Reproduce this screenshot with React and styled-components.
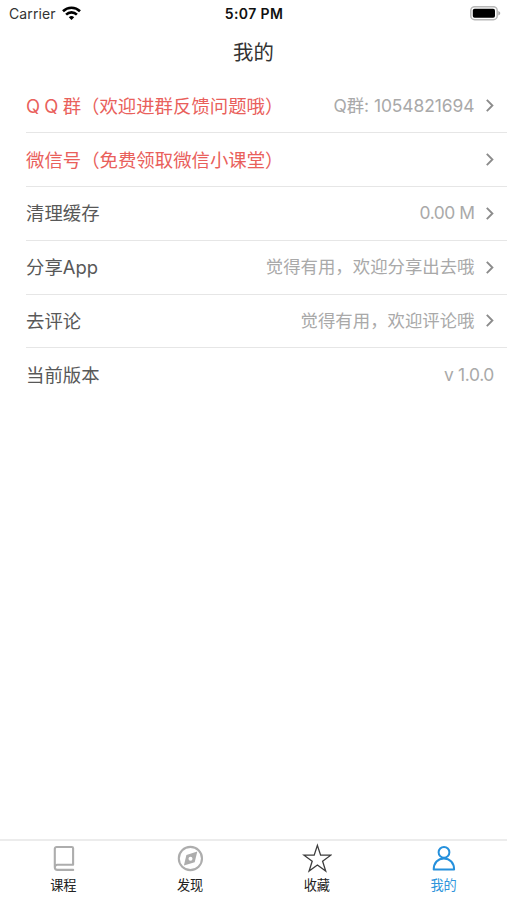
import React from 'react';
import styled, { createGlobalStyle } from 'styled-components';

const rows = [
    { label: 'Q Q 群（欢迎进群反馈问题哦）', value: 'Q群: 1054821694', red: true, arrow: true, spacing: '-0.05px' },
    { label: '微信号（免费领取微信小课堂）', value: '', red: true, arrow: true },
    { label: '清理缓存', value: '0.00 M', arrow: true, spacing: '-0.45px' },
    { label: '分享App', value: '觉得有用，欢迎分享出去哦', arrow: true },
    { label: '去评论', value: '觉得有用，欢迎评论哦', arrow: true },
    { label: '当前版本', value: 'v 1.0.0', spacing: '-0.35px' },
]

const WifiIcon = () => (
    <svg width="19" height="15" viewBox="0 0 19 15" fill="none" stroke="#000" strokeWidth="2.6">
        <path d="M1 5.2a12.2 12.2 0 0 1 17 0" />
        <path d="M4.1 8.6a7.7 7.7 0 0 1 10.8 0" />
        <path d="M9.5 14.1l-2.7-2.8a3.9 3.9 0 0 1 5.4 0z" fill="#000" stroke="none" />
    </svg>
)

const BatteryIcon = () => (
    <svg width="31" height="15" viewBox="0 0 31 15">
        <rect x="0.8" y="0.7" width="26.4" height="13" rx="3.8" fill="#fff" stroke="#b8b8b8" strokeWidth="1.5" />
        <rect x="2.8" y="2.7" width="22.2" height="9" rx="1.8" fill="#000" />
        <path d="M28.3 5c2.6 1 2.6 3.4 0 4.4z" fill="#a8a8a8" />
    </svg>
)

const ArrowIcon = () => (
    <svg width="8" height="13" viewBox="0 0 8 13" fill="none" stroke="#8c8c8c" strokeWidth="1.9">
        <path d="M0.8 0.8l5.6 5.7-5.6 5.7" />
    </svg>
)

const BookIcon = () => (
    <svg width="30" height="30" viewBox="0 0 30 30" fill="none" stroke="#adadad" strokeWidth="2.1" strokeLinecap="round" strokeLinejoin="round">
        <path d="M25.2 26.9H9.4a2.6 2.6 0 0 1-2.6-2.6V5.8a1.8 1.8 0 0 1 1.8-1.8h15.2a1.3 1.3 0 0 1 1.3 1.3v16.4H9.4a2.6 2.6 0 0 0-2.6 2.6" />
    </svg>
)

const CompassIcon = () => (
    <svg width="30" height="30" viewBox="0 0 30 30" fill="none" stroke="#adadad" strokeWidth="2.1">
        <circle cx="15.4" cy="15.5" r="11.6" />
        <path fillRule="evenodd" fill="#adadad" stroke="none" d="M22.3 8.6l-2.6 10.6-10.8 3.4 2.5-10.7zM15.5 13.7a2 2 0 1 0 .01 4 2 2 0 0 0-.01-4z" />
    </svg>
)

const StarIcon = () => (
    <svg width="30" height="30" viewBox="0 0 30 30" fill="none" stroke="#3c3c3c" strokeWidth="1.3">
        <path d="M15.4 2.4l3.2 9.8h10.2l-8.2 6.1 3.1 9.7-8.3-6-8.3 6 3.1-9.7L2 12.2h10.2z" />
    </svg>
)

const UserIcon = () => (
    <svg width="30" height="30" viewBox="0 0 30 30" fill="none" stroke="#2590dc" strokeWidth="2" strokeLinejoin="round">
        <circle cx="15" cy="9.3" r="5.4" />
        <path d="M4.7 26.6c0-6.8 4.2-11.2 10.2-11.2s10.2 4.4 10.2 11.2z" />
    </svg>
)

const tabs = [
    { label: '课程', icon: <BookIcon /> },
    { label: '发现', icon: <CompassIcon /> },
    { label: '收藏', icon: <StarIcon /> },
    { label: '我的', icon: <UserIcon />, active: true },
]

const App = () => {
    const renderRows = () => {
        return rows.map(({ label, value, red, arrow, spacing }) => (
            <Row key={label}>
                <Label $red={red}>{label}</Label>
                <Value $spacing={spacing}>{value}</Value>
                {arrow && <ArrowBox><ArrowIcon /></ArrowBox>}
            </Row>
        ))
    }

    const renderTabs = () => {
        return tabs.map(({ label, icon, active }) => (
            <Tab key={label} $active={active}>
                {icon}
                <span>{label}</span>
            </Tab>
        ))
    }

    return (
        <>
            <GlobalStyle />
            <Screen>
                <StatusBar>
                    <Carrier>Carrier <WifiIcon /></Carrier>
                    <Time>5:07 PM</Time>
                    <Battery><BatteryIcon /></Battery>
                </StatusBar>
                <Title>我的</Title>
                <List>{renderRows()}</List>
                <TabBar>{renderTabs()}</TabBar>
            </Screen>
        </>
    )
}

const GlobalStyle = createGlobalStyle`
  body {
    margin: 0;
    background: #fff;
    font-family: Inter, "Noto Sans CJK SC", sans-serif;
  }
`;

const Screen = styled.div`
  display: flex;
  flex-direction: column;
  height: 900px;
  overflow: hidden;
`;

const StatusBar = styled.div`
  display: grid;
  grid-template-columns: 1fr auto 1fr;
  align-items: center;
  height: 27px;
  padding: 0 6px 0 9px;
  color: #111;
`;

const Carrier = styled.div`
  display: flex;
  align-items: center;
  gap: 6px;
  font-size: 14px;
  letter-spacing: 0.1px;
  color: #333;
`;

const Time = styled.div`
  margin-left: -2px;
  font-size: 14px;
  font-weight: 600;
  letter-spacing: 0.4px;
`;

const Battery = styled.div`
  display: flex;
  justify-content: flex-end;
`;

const Title = styled.h1`
  margin: 0;
  height: 52.4px;
  line-height: 51px;
  text-align: center;
  font-size: 20.4px;
  font-weight: 400;
  color: #333;
`;

const List = styled.div`
  flex: 1;
  padding-left: 26px;
`;

const Row = styled.div`
  display: flex;
  align-items: center;
  box-sizing: border-box;
  height: 53.8px;
  padding-right: 13px;
  border-bottom: 1px solid #e6e6e6;

  &:last-child {
    border-bottom: none;
  }
`;

const Label = styled.span`
  flex: 1;
  font-size: 18.4px;
  line-height: 26px;
  word-spacing: -0.9px;
  white-space: nowrap;
  color: ${({ $red }) => ($red ? '#e9605b' : '#585858')};
`;

const Value = styled.span`
  font-size: 17.4px;
  line-height: 26px;
  letter-spacing: ${({ $spacing }) => $spacing || 'normal'};
  white-space: nowrap;
  color: #a9a9a9;
`;

const ArrowBox = styled.span`
  display: flex;
  margin-left: 11.5px;
`;

const TabBar = styled.div`
  display: flex;
  box-sizing: border-box;
  height: 61px;
  border-top: 2px solid #ececec;
`;

const Tab = styled.div`
  flex: 1;
  display: flex;
  flex-direction: column;
  align-items: center;
  padding-top: 2px;
  font-size: 13.2px;
  line-height: 24px;
  color: ${({ $active }) => ($active ? '#2f95dc' : '#222')};
`;

export default App;
